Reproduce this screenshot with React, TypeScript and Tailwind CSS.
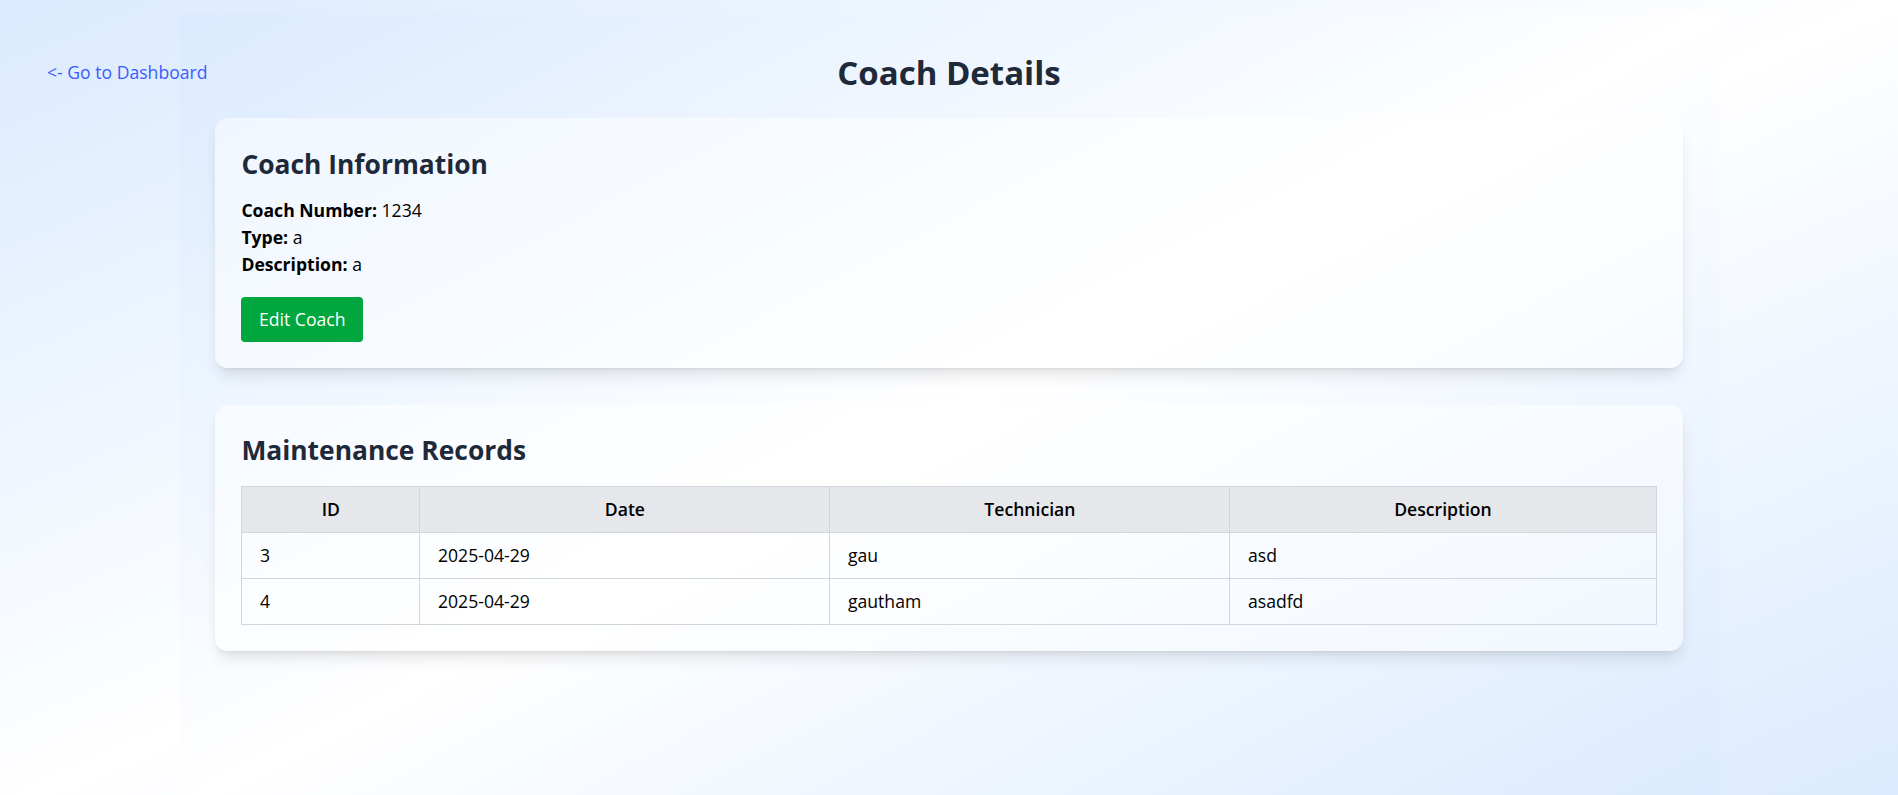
const records = [
  { id: 3, date: '2025-04-29', technician: 'gau', description: 'asd' },
  { id: 4, date: '2025-04-29', technician: 'gautham', description: 'asadfd' }
];

const CoachDetails = () => {
  return (
    <div className="relative min-h-screen bg-gradient-to-br from-blue-100 via-white to-blue-100 pt-[14px] font-['Open_Sans',sans-serif]">
      <a
        href="#"
        className="absolute left-[47px] top-[59px] text-[17.6px] leading-[26.4px] text-[#3b5bfd]"
      >
        {'<- Go to Dashboard'}
      </a>
      <div className="mx-auto min-h-screen w-[1540px] bg-gradient-to-br from-blue-100 via-white to-blue-100 px-[36px] pt-[39px]">
        <h1 className="mb-[25px] text-center text-[33px] font-bold leading-[40px] text-gray-800">
          {'Coach Details'}
        </h1>

        {/* coach info */}
        <div className="rounded-[13px] bg-white/50 p-[26.4px] shadow-lg">
          <h2 className="mb-[14.6px] pt-[3px] text-[26.4px] font-bold leading-[35.2px] text-gray-800">
            {'Coach Information'}
          </h2>
          <div className="text-[17.6px] leading-[27px] text-black">
            <p>
              <span className="font-bold">Coach Number:</span> 1234
            </p>
            <p>
              <span className="font-bold">Type:</span> a
            </p>
            <p>
              <span className="font-bold">Description:</span> a
            </p>
          </div>
          <button
            type="button"
            className="mt-[19px] rounded-[4px] bg-[#00a63e] px-[17.6px] py-[9px] text-[17.6px] leading-[26.4px] text-white"
          >
            {'Edit Coach'}
          </button>
        </div>

        {/* maintenance records */}
        <div className="mt-[37px] rounded-[13px] bg-white/50 p-[26.4px] shadow-lg">
          <h2 className="mb-[17px] pt-[2px] text-[26.4px] font-bold leading-[35.2px] text-gray-800">
            {'Maintenance Records'}
          </h2>
          <table className="w-full border-collapse text-[17.6px] leading-[27px]">
            <thead>
              <tr className="bg-gray-200">
                <th className="w-[178px] border border-gray-300 px-[17.6px] py-[9px] text-center font-semibold">
                  {'ID'}
                </th>
                <th className="w-[410px] border border-gray-300 px-[17.6px] py-[9px] text-center font-semibold">
                  {'Date'}
                </th>
                <th className="w-[400px] border border-gray-300 px-[17.6px] py-[9px] text-center font-semibold">
                  {'Technician'}
                </th>
                <th className="border border-gray-300 px-[17.6px] py-[9px] text-center font-semibold">
                  {'Description'}
                </th>
              </tr>
            </thead>
            <tbody>
              {records.map((r) => (
                <tr key={r.id}>
                  <td className="border border-gray-300 px-[17.6px] py-[9px]">{r.id}</td>
                  <td className="border border-gray-300 px-[17.6px] py-[9px]">{r.date}</td>
                  <td className="border border-gray-300 px-[17.6px] py-[9px]">{r.technician}</td>
                  <td className="border border-gray-300 px-[17.6px] py-[9px]">{r.description}</td>
                </tr>
              ))}
            </tbody>
          </table>
        </div>
      </div>
    </div>
  );
};

export default function App() {
  return <CoachDetails />;
}
